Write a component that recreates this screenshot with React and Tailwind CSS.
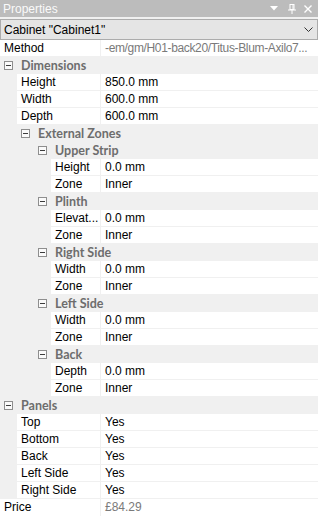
import React from 'react';

const font = { fontFamily: '"Liberation Sans", Arial, sans-serif' };
const groupFont = { fontFamily: 'Lato, "Liberation Sans", sans-serif' };

const rows = [
  { type: 'prop', depth: 0, label: 'Method', value: '-em/gm/H01-back20/Titus-Blum-Axilo7...', muted: true, tight: true },
  { type: 'group', level: 0, label: 'Dimensions' },
  { type: 'prop', depth: 1, label: 'Height', value: '850.0 mm' },
  { type: 'prop', depth: 1, label: 'Width', value: '600.0 mm' },
  { type: 'prop', depth: 1, label: 'Depth', value: '600.0 mm' },
  { type: 'group', level: 1, label: 'External Zones' },
  { type: 'group', level: 2, label: 'Upper Strip' },
  { type: 'prop', depth: 3, label: 'Height', value: '0.0 mm' },
  { type: 'prop', depth: 3, label: 'Zone', value: 'Inner' },
  { type: 'group', level: 2, label: 'Plinth' },
  { type: 'prop', depth: 3, label: 'Elevat...', value: '0.0 mm' },
  { type: 'prop', depth: 3, label: 'Zone', value: 'Inner' },
  { type: 'group', level: 2, label: 'Right Side' },
  { type: 'prop', depth: 3, label: 'Width', value: '0.0 mm' },
  { type: 'prop', depth: 3, label: 'Zone', value: 'Inner' },
  { type: 'group', level: 2, label: 'Left Side' },
  { type: 'prop', depth: 3, label: 'Width', value: '0.0 mm' },
  { type: 'prop', depth: 3, label: 'Zone', value: 'Inner' },
  { type: 'group', level: 2, label: 'Back' },
  { type: 'prop', depth: 3, label: 'Depth', value: '0.0 mm' },
  { type: 'prop', depth: 3, label: 'Zone', value: 'Inner' },
  { type: 'group', level: 0, label: 'Panels' },
  { type: 'prop', depth: 1, label: 'Top', value: 'Yes' },
  { type: 'prop', depth: 1, label: 'Bottom', value: 'Yes' },
  { type: 'prop', depth: 1, label: 'Back', value: 'Yes' },
  { type: 'prop', depth: 1, label: 'Left Side', value: 'Yes' },
  { type: 'prop', depth: 1, label: 'Right Side', value: 'Yes' },
  { type: 'prop', depth: 0, label: 'Price', value: '£84.29', muted: true, last: true },
];

const indentClass = { 0: 'w-0', 1: 'w-[17px]', 3: 'w-[51px]' };
const groupPad = { 0: 'pl-[4px]', 1: 'pl-[21px]', 2: 'pl-[38px]' };

const MinusBox = () => (
  <svg width="9" height="9" viewBox="0 0 9 9" className="shrink-0">
    <rect x="0.5" y="0.5" width="8" height="8" fill="#fafafa" stroke="#8e8e8e" />
    <line x1="2" y1="4.5" x2="7" y2="4.5" stroke="#3c3c3c" />
  </svg>
);

const GroupRow = ({ row }) => (
  <div className={`flex h-[17px] items-center gap-[8px] bg-[#f0f0f0] ${groupPad[row.level]}`}>
    <MinusBox />
    <span className="text-[12.5px] font-bold leading-[16px] text-[#6d6d6d]" style={groupFont}>
      {row.label}
    </span>
  </div>
);

const PropRow = ({ row }) => (
  <div className="flex h-[17px]">
    <div className={`shrink-0 bg-[#f0f0f0] ${indentClass[row.depth]}`} />
    <div
      className={`flex-1 min-w-0 bg-white border-r border-[#f0f0f0] ${row.last ? '' : 'border-b'} pl-[4px] text-[12px] leading-[16px] text-black whitespace-nowrap overflow-hidden`}
    >
      {row.label}
    </div>
    <div
      className={`w-[217px] shrink-0 bg-white ${row.last ? '' : 'border-b'} border-[#f0f0f0] pl-[4px] text-[12px] leading-[16px] whitespace-nowrap overflow-hidden ${row.muted ? 'text-[#7a7a7a]' : 'text-black'} ${row.tight ? 'tracking-[-0.35px]' : ''}`}
    >
      {row.value}
    </div>
  </div>
);

export default function App() {
  return (
    <div className="w-[318px] h-[516px] bg-[#f0f0f0] overflow-hidden" style={font}>
      {/* title bar */}
      <div className="flex h-[17px] items-center bg-[#bcbcbc] pl-[3px] pr-[6px] text-[#fafafa]">
        <span className="flex-1 text-[12px] leading-[16px]">Properties</span>
        <svg width="8" height="5" viewBox="0 0 8 5" className="mr-[10px]">
          <polygon points="0,0 8,0 4,4.5" fill="#fff" />
        </svg>
        <svg width="8" height="10" viewBox="0 0 8 10" className="mr-[8px]">
          <rect x="2" y="0.5" width="4" height="5" fill="none" stroke="#fff" />
          <line x1="0" y1="6" x2="8" y2="6" stroke="#fff" />
          <line x1="4" y1="6" x2="4" y2="10" stroke="#fff" />
          <line x1="5" y1="1" x2="5" y2="5.5" stroke="#fff" />
        </svg>
        <svg width="8" height="8" viewBox="0 0 8 8">
          <path d="M0.5 0.5 L7.5 7.5 M7.5 0.5 L0.5 7.5" stroke="#fff" strokeWidth="1.4" />
        </svg>
      </div>

      {/* object selector */}
      <div className="mt-[2px] flex h-[21px] items-center border border-[#acacac] bg-[#e5e5e5] pl-[3px] pr-[4px]">
        <span className="flex-1 text-[12px] leading-[16px] text-black">Cabinet "Cabinet1"</span>
        <svg width="9" height="5" viewBox="0 0 9 5">
          <path d="M0.5 0.5 L4.5 4.5 L8.5 0.5" fill="none" stroke="#333" />
        </svg>
      </div>

      {rows.map((row, i) =>
        row.type === 'group' ? <GroupRow key={i} row={row} /> : <PropRow key={i} row={row} />
      )}
    </div>
  );
}
